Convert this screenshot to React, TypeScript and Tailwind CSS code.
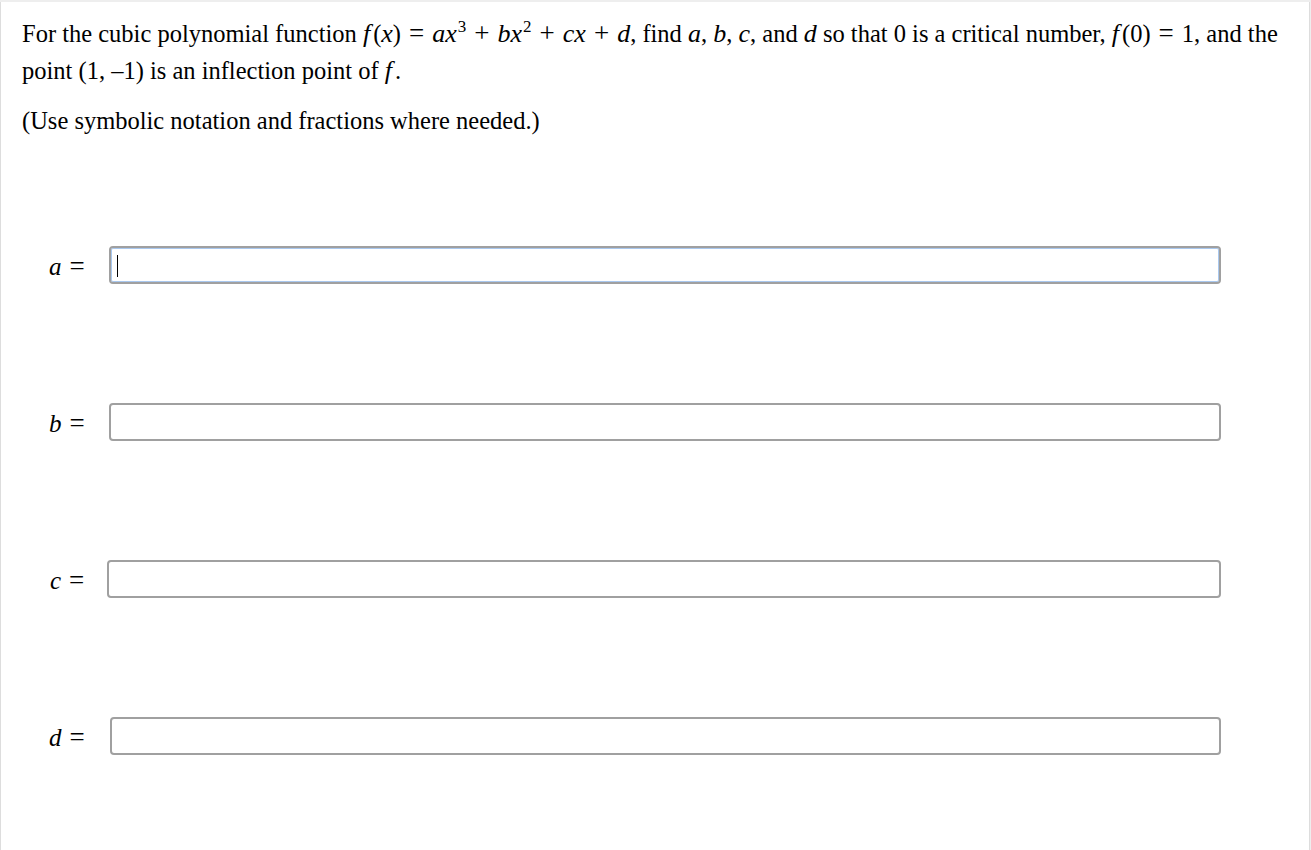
import React from "react";

const serif = { fontFamily: '"Liberation Serif", "Times New Roman", serif' };

function V({ children }: { children: React.ReactNode }) {
  return <span className="italic text-[26px]">{children}</span>;
}

function F() {
  return <span className="italic text-[26px] pr-[3px]">f</span>;
}

function Op({ children }: { children: React.ReactNode }) {
  return <span className="text-[27px] leading-none mx-[8px]">{children}</span>;
}

function Sup({ children }: { children: React.ReactNode }) {
  return <sup className="text-[17px] -top-[10px] ml-[1px]">{children}</sup>;
}

const rows = [
  { name: "a", focused: true, pl: "pl-[48px]", mr: "mr-[24px]" },
  { name: "b", focused: false, pl: "pl-[48px]", mr: "mr-[24px]" },
  { name: "c", focused: false, pl: "pl-[49px]", mr: "mr-[23px]" },
  { name: "d", focused: false, pl: "pl-[48px]", mr: "mr-[25px]" },
];

export default function App() {
  return (
    <div className="min-h-[850px] bg-[#eeeeee] pt-[2px]" style={serif}>
      <div className="min-h-[848px] bg-white border-l border-r border-[#dddddd] mr-[1px] text-black">
        <div className="pl-[21px] pr-[16px] pt-[13px] text-[24.5px]">
          <p className="leading-[37px]">
            For the cubic polynomial function <F />(<V>x</V>)<Op>=</Op>
            <V>ax</V>
            <Sup>3</Sup>
            <Op>+</Op>
            <V>bx</V>
            <Sup>2</Sup>
            <Op>+</Op>
            <V>cx</V>
            <Op>+</Op>
            <V>d</V>, find <V>a</V>, <V>b</V>, <V>c</V>, and <V>d</V> so that 0 is a critical number,{" "}
            <F />(0)<Op>=</Op>1, and the point (1, –1) is an inflection point of <F />.
          </p>
          <p className="leading-[37px] mt-[13px]">(Use symbolic notation and fractions where needed.)</p>
        </div>

        <div className="flex flex-col gap-[119px] mt-[107px] pr-[88px]">
          {rows.map((r) => (
            <div key={r.name} className={`flex items-center h-[38px] ${r.pl}`}>
              <span className={`text-[25px] leading-none whitespace-nowrap pt-[2px] ${r.mr}`}>
                <span className="italic">{r.name}</span>
                <span className="ml-[8px] text-[27px]">=</span>
              </span>
              <div className="relative flex-1">
                <input
                  type="text"
                  className={`block w-full h-[38px] rounded-[4px] border-2 border-[#a0a0a0] bg-white outline-none px-[6px] ${
                    r.focused ? "shadow-[inset_0_0_0_1px_#a9c8ef]" : ""
                  }`}
                />
                {r.focused && (
                  <span className="absolute left-[8px] top-[9px] w-[1px] h-[22px] bg-black" />
                )}
              </div>
            </div>
          ))}
        </div>
      </div>
    </div>
  );
}
